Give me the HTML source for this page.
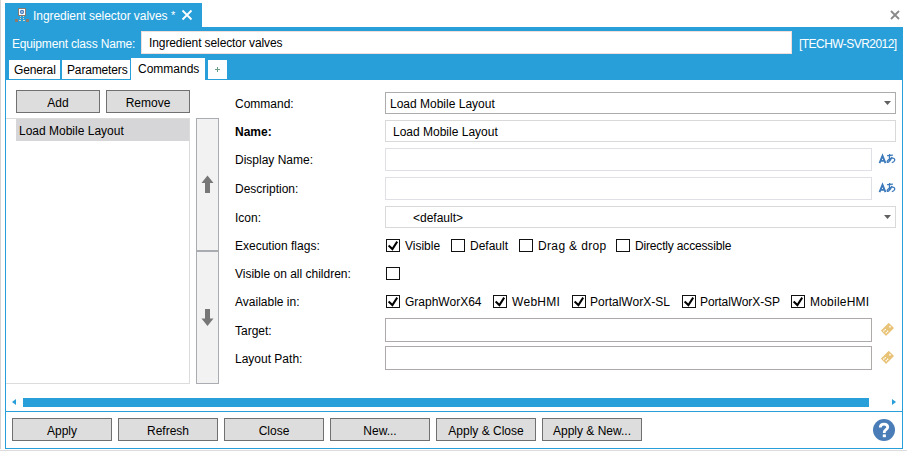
<!DOCTYPE html>
<html><head><meta charset="utf-8">
<style>
html,body{margin:0;padding:0;}
body{width:907px;height:453px;position:relative;overflow:hidden;background:#fff;font-family:"Liberation Sans",sans-serif;font-size:12px;color:#000;}
.a{position:absolute;}
.t{position:absolute;white-space:nowrap;line-height:14px;}
.blue{background:#299fd9;}
.btn{position:absolute;box-sizing:border-box;background:#dddddd;border:1px solid #707070;text-align:center;line-height:24px;}
.box{position:absolute;box-sizing:border-box;background:#fff;border:1px solid #abadb3;}
.cb{position:absolute;box-sizing:border-box;width:14px;height:13px;border:1px solid #111;background:#fff;}
.lbl{position:absolute;left:235px;white-space:nowrap;line-height:14px;}
.wt{color:#fff;}
svg{position:absolute;overflow:visible;}
</style></head><body>
<!-- left gray strip & bottom line -->
<div class="a" style="left:0;top:0;width:1px;height:449px;background:#d4d4d4"></div>
<div class="a" style="left:0;top:450px;width:907px;height:1px;background:#dcdcdc"></div>

<!-- title tab -->
<div class="a blue" style="left:5px;top:3px;width:197px;height:24px;"></div>
<!-- header bar -->
<div class="a blue" style="left:5px;top:27px;width:898px;height:53px;"></div>

<!-- content frame -->
<div class="a" style="left:5px;top:79px;width:898px;height:370px;box-sizing:border-box;border:1px solid #299fd9;background:#fff"></div>

<!-- title icon -->
<svg style="left:0;top:0" width="40" height="30">
  <rect x="18.5" y="8.5" width="7" height="7" fill="#fff" stroke="#8a7a70" stroke-width="1"/>
  <circle cx="22" cy="12" r="1.6" fill="#a8c4e8" stroke="#4f80c2" stroke-width="1.1"/>
  <rect x="15" y="19" width="3" height="3" fill="#8a7a70"/>
  <rect x="26" y="19" width="3" height="3" fill="#8a7a70"/>
  <rect x="20" y="16" width="1" height="1" fill="#e0d4c0"/>
  <rect x="23" y="16" width="1" height="1" fill="#e0d4c0"/>
  <rect x="20" y="18" width="1" height="1" fill="#e0d4c0"/>
  <rect x="23" y="18" width="1" height="1" fill="#e0d4c0"/>
  <rect x="19" y="20" width="2" height="1" fill="#e0d4c0"/>
  <rect x="23" y="20" width="2" height="1" fill="#e0d4c0"/>
</svg>
<div class="t wt" style="left:33px;top:9px;letter-spacing:-0.06px;">Ingredient selector valves</div>
<div class="t wt" style="left:171px;top:8px;font-size:11px;">*</div>
<svg style="left:181px;top:9px" width="12" height="12"><path d="M1.5 1.5 L10.5 10.5 M10.5 1.5 L1.5 10.5" stroke="#fff" stroke-width="1.8"/></svg>

<!-- window close -->
<svg style="left:889px;top:9px" width="12" height="12"><path d="M2 2 L10 10 M10 2 L2 10" stroke="#8a8a8a" stroke-width="1.8"/></svg>

<!-- header -->
<div class="t wt" style="left:12px;top:37px;letter-spacing:-0.17px;">Equipment class Name:</div>
<div class="box" style="left:141px;top:31px;width:651px;height:23px;border-color:#f0dedb;"></div>
<div class="t" style="left:149px;top:36px;letter-spacing:-0.1px;">Ingredient selector valves</div>
<div class="t wt" style="left:799px;top:37px;letter-spacing:-0.55px;">[TECHW-SVR2012]</div>

<!-- tabs -->
<div class="a" style="left:9px;top:60px;width:51px;height:19px;background:#fff"></div>
<div class="t" style="left:14px;top:63px;letter-spacing:-0.15px;">General</div>
<div class="a" style="left:62px;top:60px;width:68px;height:19px;background:#fff"></div>
<div class="t" style="left:67px;top:63px;letter-spacing:-0.15px;">Parameters</div>
<div class="a" style="left:131px;top:58px;width:74px;height:22px;background:#fff"></div>
<div class="t" style="left:138px;top:62px;">Commands</div>
<div class="a" style="left:208px;top:60px;width:19px;height:19px;background:#fff"></div>
<svg style="left:215px;top:67px" width="6" height="6"><path d="M2.5 0 V5 M0 2.5 H5" stroke="#6b9c84" stroke-width="1"/></svg>

<!-- left pane -->
<div class="btn" style="left:16px;top:90px;width:84px;height:23px;">Add</div>
<div class="btn" style="left:106px;top:90px;width:84px;height:23px;">Remove</div>
<div class="a" style="left:6px;top:118px;width:184px;height:266px;box-sizing:border-box;border:1px solid #dcdcdc;border-left:none;background:#fff"></div>
<div class="a" style="left:16px;top:119px;width:173px;height:22px;background:#d6d5d8"></div>
<div class="t" style="left:19px;top:124px;">Load Mobile Layout</div>

<!-- up/down panel -->
<div class="a" style="left:196px;top:118px;width:23px;height:266px;box-sizing:border-box;border:1px solid #a9adb1;background:#f2f2f2"></div>
<div class="a" style="left:197px;top:250px;width:21px;height:2px;background:#a9adb1"></div>
<svg style="left:0;top:0" width="230" height="400">
  <path d="M207.5 175.5 L213.5 183 L210 183 L210 193 L205 193 L205 183 L201.5 183 Z" fill="#777"/>
  <path d="M205 309 L210 309 L210 318.5 L213.5 318.5 L207.5 326 L201.5 318.5 L205 318.5 Z" fill="#777"/>
</svg>

<!-- form labels -->
<div class="lbl" style="top:97px;">Command:</div>
<div class="lbl" style="top:125px;font-weight:bold;">Name:</div>
<div class="lbl" style="top:153px;">Display Name:</div>
<div class="lbl" style="top:182px;">Description:</div>
<div class="lbl" style="top:211px;">Icon:</div>
<div class="lbl" style="top:239px;">Execution flags:</div>
<div class="lbl" style="top:267px;">Visible on all children:</div>
<div class="lbl" style="top:295px;">Available in:</div>
<div class="lbl" style="top:324px;">Target:</div>
<div class="lbl" style="top:352px;">Layout Path:</div>

<!-- inputs -->
<div class="box" style="left:385px;top:92px;width:511px;height:22px;border-color:#acacac;"></div>
<div class="t" style="left:390px;top:97px;">Load Mobile Layout</div>
<svg style="left:884px;top:101px" width="8" height="5"><path d="M0 0 H7 L3.5 4 Z" fill="#606060"/></svg>

<div class="box" style="left:385px;top:120px;width:511px;height:22px;border-color:#d9d9d9;"></div>
<div class="t" style="left:393px;top:125px;">Load Mobile Layout</div>

<div class="box" style="left:385px;top:148px;width:487px;height:23px;border-color:#dfe0e6;"></div>
<svg style="left:878px;top:154px" width="9" height="10"><path d="M1.5 9.2 L4.5 1.8 L7.5 9.2 M2.7 6.8 H6.3" stroke="#3d7abb" stroke-width="1.85" fill="none"/></svg>
<svg style="left:886px;top:153px" width="10" height="11"><path d="M1.1 2.6 L6.9 2.1 M3.6 1 C3.4 3.5, 3.4 6, 3.7 8.3 M5.9 4 C5 6.5, 3.5 8.8, 2 9.3 C1 9.5, 0.8 8.2, 2 7.2 C3.5 5.6, 6.5 4.6, 8 5.5 C9.3 6.4, 9 8.9, 5.8 9.6" stroke="#3d7abb" stroke-width="1.35" fill="none"/></svg>

<div class="box" style="left:385px;top:177px;width:487px;height:23px;border-color:#dfe0e6;"></div>
<svg style="left:878px;top:183px" width="9" height="10"><path d="M1.5 9.2 L4.5 1.8 L7.5 9.2 M2.7 6.8 H6.3" stroke="#3d7abb" stroke-width="1.85" fill="none"/></svg>
<svg style="left:886px;top:182px" width="10" height="11"><path d="M1.1 2.6 L6.9 2.1 M3.6 1 C3.4 3.5, 3.4 6, 3.7 8.3 M5.9 4 C5 6.5, 3.5 8.8, 2 9.3 C1 9.5, 0.8 8.2, 2 7.2 C3.5 5.6, 6.5 4.6, 8 5.5 C9.3 6.4, 9 8.9, 5.8 9.6" stroke="#3d7abb" stroke-width="1.35" fill="none"/></svg>

<div class="box" style="left:385px;top:206px;width:511px;height:22px;border-color:#d9d9d9;"></div>
<div class="t" style="left:413px;top:211px;">&lt;default&gt;</div>
<svg style="left:884px;top:215px" width="8" height="5"><path d="M0 0 H7 L3.5 4 Z" fill="#606060"/></svg>

<!-- checkboxes row 1 -->
<div class="cb" style="left:386px;top:239px;"></div>
<div class="t" style="left:405px;top:239px;">Visible</div>
<div class="cb" style="left:451px;top:239px;"></div>
<div class="t" style="left:470px;top:239px;">Default</div>
<div class="cb" style="left:519px;top:239px;"></div>
<div class="t" style="left:538px;top:239px;letter-spacing:0.35px;">Drag &amp; drop</div>
<div class="cb" style="left:616px;top:239px;"></div>
<div class="t" style="left:635px;top:239px;letter-spacing:-0.17px;">Directly accessible</div>
<!-- row 2 -->
<div class="cb" style="left:386px;top:267px;"></div>
<!-- row 3 -->
<div class="cb" style="left:386px;top:295px;"></div>
<div class="t" style="left:405px;top:295px;">GraphWorX64</div>
<div class="cb" style="left:493px;top:295px;"></div>
<div class="t" style="left:512px;top:295px;letter-spacing:0.3px;">WebHMI</div>
<div class="cb" style="left:572px;top:295px;"></div>
<div class="t" style="left:590px;top:295px;">PortalWorX-SL</div>
<div class="cb" style="left:682px;top:295px;"></div>
<div class="t" style="left:700px;top:295px;letter-spacing:-0.1px;">PortalWorX-SP</div>
<div class="cb" style="left:791px;top:295px;"></div>
<div class="t" style="left:810px;top:295px;letter-spacing:0.22px;">MobileHMI</div>
<svg style="left:0;top:0" width="907" height="453">
  <g stroke="#000" stroke-width="2" fill="none" stroke-linecap="butt" stroke-linejoin="miter">
    <path d="M388.6 245.6 L392.4 249.1 L397.2 241.6"/>
    <path d="M388.6 301.6 L392.4 305.1 L397.2 297.6"/>
    <path d="M495.6 301.6 L499.4 305.1 L504.2 297.6"/>
    <path d="M574.6 301.6 L578.4 305.1 L583.2 297.6"/>
    <path d="M684.6 301.6 L688.4 305.1 L693.2 297.6"/>
    <path d="M793.6 301.6 L797.4 305.1 L802.2 297.6"/>
  </g>
</svg>

<div class="box" style="left:385px;top:318px;width:487px;height:24px;border-color:#aeaaaa;"></div>
<div class="box" style="left:385px;top:346px;width:487px;height:24px;border-color:#aeaaaa;"></div>
<!-- tag icons -->
<svg style="left:880px;top:322px" width="16" height="16"><g transform="translate(7.4 7.3) rotate(-45)"><rect x="-5.6" y="-3.7" width="11.2" height="7.4" rx="0.6" fill="#e8c275"/><circle cx="3.6" cy="0" r="1" fill="#fff" opacity="0.8"/><path d="M-4.4 -1.3 H-1 M-4 1.6 H-0.2" stroke="#fff" stroke-width="1.2" stroke-dasharray="1.5 0.5"/></g></svg>
<svg style="left:880px;top:350px" width="16" height="16"><g transform="translate(7.4 7.3) rotate(-45)"><rect x="-5.6" y="-3.7" width="11.2" height="7.4" rx="0.6" fill="#e8c275"/><circle cx="3.6" cy="0" r="1" fill="#fff" opacity="0.8"/><path d="M-4.4 -1.3 H-1 M-4 1.6 H-0.2" stroke="#fff" stroke-width="1.2" stroke-dasharray="1.5 0.5"/></g></svg>

<!-- scrollbar -->
<svg style="left:12px;top:399px" width="5" height="7"><path d="M4 0 V6 L0 3 Z" fill="#299fd9"/></svg>
<div class="a blue" style="left:23px;top:398px;width:846px;height:9px;"></div>
<svg style="left:892px;top:399px" width="5" height="7"><path d="M0 0 V6 L4 3 Z" fill="#299fd9"/></svg>
<div class="a blue" style="left:6px;top:411px;width:896px;height:1px;"></div>

<!-- bottom buttons -->
<div class="btn" style="left:12px;top:418px;width:100px;height:23px;">Apply</div>
<div class="btn" style="left:118px;top:418px;width:100px;height:23px;">Refresh</div>
<div class="btn" style="left:224px;top:418px;width:100px;height:23px;">Close</div>
<div class="btn" style="left:330px;top:418px;width:100px;height:23px;">New...</div>
<div class="btn" style="left:436px;top:418px;width:100px;height:23px;">Apply &amp; Close</div>
<div class="btn" style="left:542px;top:418px;width:100px;height:23px;">Apply &amp; New...</div>

<!-- help -->
<svg style="left:873px;top:419px" width="22" height="22"><circle cx="11" cy="11" r="11" fill="#4a7db8"/><path d="M7.3 8.6 C7.3 6.3, 9 5.1, 11 5.1 C13.1 5.1, 14.7 6.4, 14.7 8.3 C14.7 10.4, 11.3 10.9, 11.3 13 V14" stroke="#fff" stroke-width="2.8" fill="none"/><rect x="9.8" y="15.4" width="3.1" height="2.8" fill="#fff"/></svg>

</body></html>
